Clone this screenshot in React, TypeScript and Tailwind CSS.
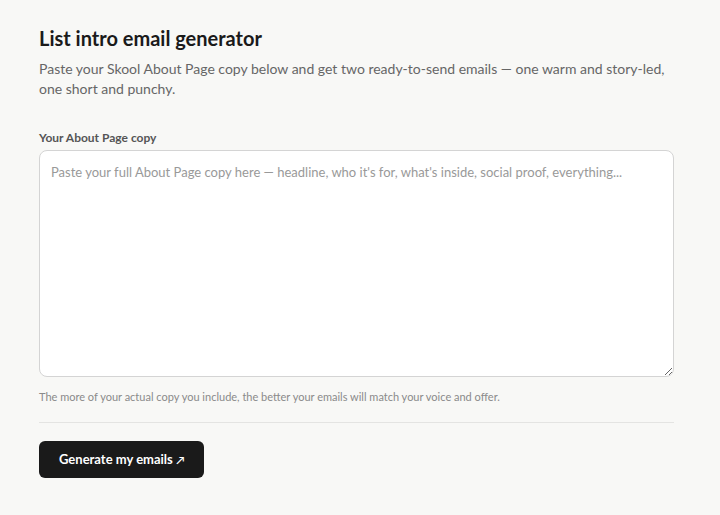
export default function App() {
  return (
    <div className="min-h-[515px] w-full bg-[#f8f8f6] font-['Lato',sans-serif]">
      <div className="w-[635px] ml-[39px] pt-[24px]">
        <h1 className="text-[20px] leading-[28px] font-bold text-[#1a1a1a]">List intro email generator</h1>
        <p className="mt-[7px] text-[14px] leading-[20px] text-[#666]">
          Paste your Skool About Page copy below and get two ready-to-send emails — one warm and story-led, one short and punchy.
        </p>
        <label className="block mt-[31px] text-[12px] leading-[16px] font-bold text-[#555]">Your About Page copy</label>
        <textarea
          className="mt-[4px] block w-full h-[227px] rounded-[8px] border border-[#d4d4d4] bg-white px-[11px] pt-[11px] pb-[10px] text-[13px] leading-[20px] text-[#333] placeholder:text-[#999] outline-none"
          placeholder="Paste your full About Page copy here — headline, who it's for, what's inside, social proof, everything..."
        />
        <p className="mt-[12px] text-[11px] leading-[16px] text-[#8a8a8a]">
          The more of your actual copy you include, the better your emails will match your voice and offer.
        </p>
        <div className="mt-[17px] h-px bg-[#e4e4e2]" />
        <button className="mt-[18px] h-[37px] px-[20px] rounded-[6px] bg-[#1a1a1a] text-white text-[13px] font-bold">
          Generate my emails <span className="text-[11px]">↗</span>
        </button>
      </div>
    </div>
  );
}
